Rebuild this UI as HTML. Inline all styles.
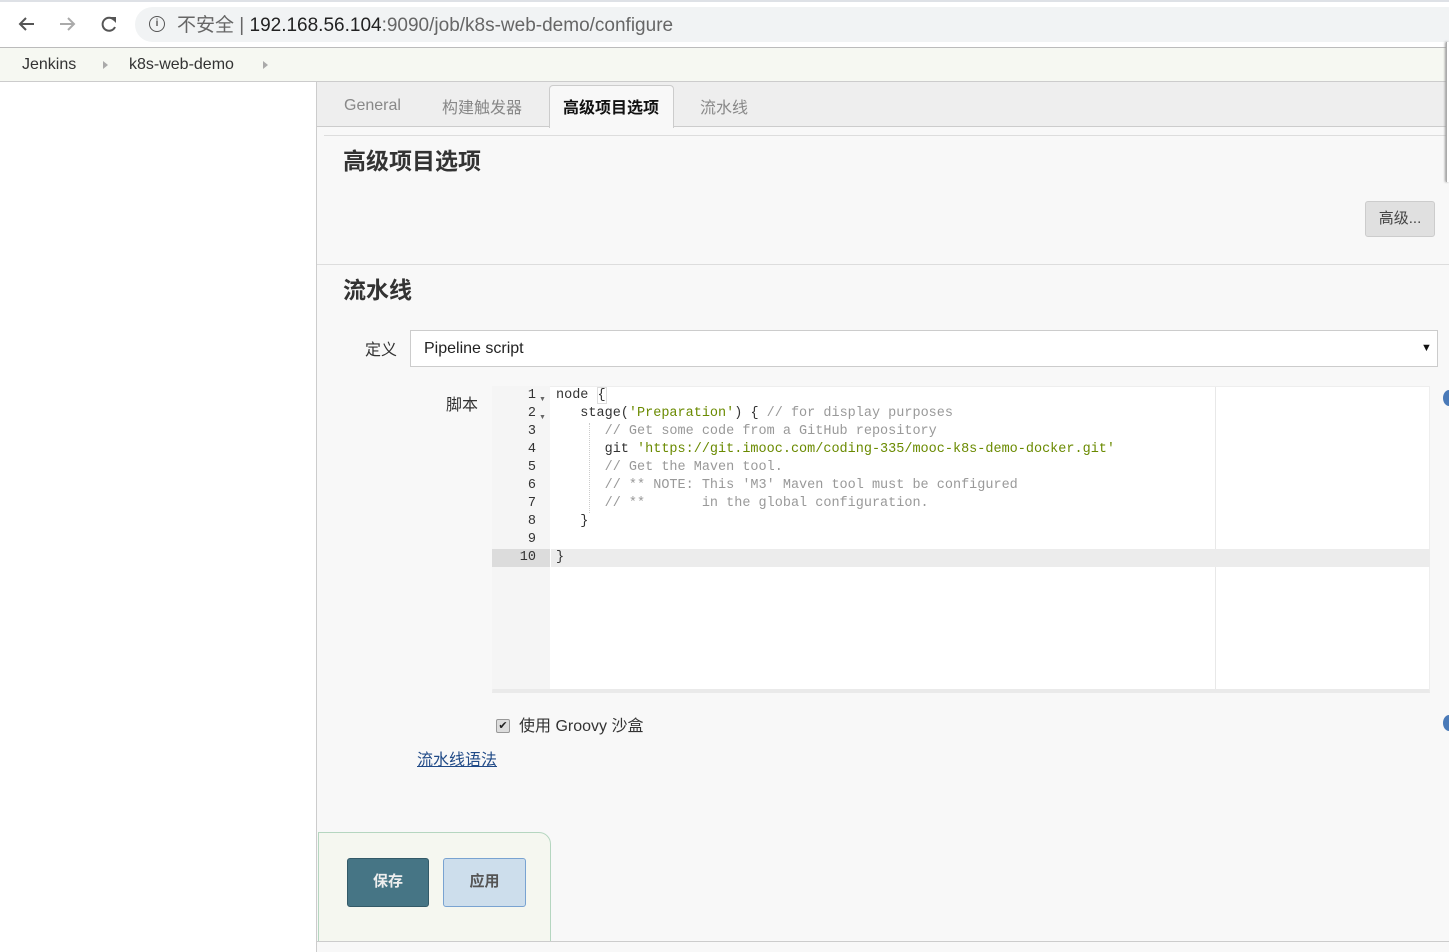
<!DOCTYPE html>
<html><head><meta charset="utf-8"><style>
*{margin:0;padding:0;box-sizing:border-box}
body{width:1449px;height:952px;overflow:hidden;background:#fff;font-family:"Liberation Sans","Noto Sans CJK SC",sans-serif;color:#333;position:relative}
.a{position:absolute}
.code{font-family:"Liberation Mono","DejaVu Sans Mono",monospace;font-size:13.5px;line-height:18px;white-space:pre;color:#333}
.c{color:#999}.s{color:#6a8a00}
</style></head><body>
<div class="a" style="left:0;top:0;width:1449px;height:2px;background:#dee1e6"></div>
<div class="a" style="left:0;top:47px;width:1449px;height:1px;background:#bbb"></div>
<svg class="a" style="left:16px;top:14px" width="110" height="22" viewBox="0 0 110 22">
<path d="M18 10H4M10 4L4 10L10 16" stroke="#555" stroke-width="2" fill="none"/>
<path d="M44 10H58M52 4L58 10L52 16" stroke="#aaa" stroke-width="2" fill="none"/>
<path d="M98 6A6.5 6.5 0 1 0 99 13" stroke="#555" stroke-width="2" fill="none"/><path d="M94 3L100 3L100 9Z" fill="#555"/>
</svg>
<div class="a" style="left:135px;top:7px;width:1330px;height:35px;border-radius:18px;background:#f1f3f4"></div>
<div class="a" style="left:149px;top:16px;width:16px;height:16px;border:1.6px solid #555;border-radius:50%;font-size:10px;text-align:center;line-height:13px;font-weight:bold;color:#555">i</div>
<div class="a" style="left:177px;top:10px;font-size:19px;color:#666">不安全 | <span style="color:#222">192.168.56.104</span>:9090/job/k8s-web-demo/configure</div>
<div class="a" style="left:0;top:48px;width:1449px;height:34px;background:#f6f8f2;border-bottom:1px solid #ccc"></div>
<div class="a" style="left:22px;top:56px;font-size:16px;color:#333">Jenkins</div>
<div class="a" style="left:103px;top:61px;border-left:5px solid #aaa;border-top:4px solid transparent;border-bottom:4px solid transparent"></div>
<div class="a" style="left:129px;top:56px;font-size:16px;color:#333">k8s-web-demo</div>
<div class="a" style="left:263px;top:61px;border-left:5px solid #aaa;border-top:4px solid transparent;border-bottom:4px solid transparent"></div>
<div class="a" style="left:316px;top:82px;width:1133px;height:870px;background:#f8f8f8;border-left:1px solid #ccc"></div>
<div class="a" style="left:317px;top:82px;width:1132px;height:45px;background:#eee;border-bottom:1px solid #ccc"></div>
<div class="a" style="left:549px;top:85px;width:125px;height:43px;background:#f8f8f8;border:1px solid #ccc;border-bottom:none;border-radius:4px 4px 0 0"></div>
<div class="a" style="left:344px;top:97px;font-size:16px;color:#888">General</div>
<div class="a" style="left:442px;top:94px;font-size:16px;color:#888">构建触发器</div>
<div class="a" style="left:563px;top:94px;font-size:16px;color:#111;font-weight:bold">高级项目选项</div>
<div class="a" style="left:700px;top:94px;font-size:16px;color:#888">流水线</div>
<div class="a" style="left:324px;top:135px;width:1125px;height:1px;background:#ddd"></div>
<div class="a" style="left:1446px;top:42px;width:3px;height:140px;background:#fff;border-left:1px solid #aaa;box-shadow:-1px 0 2px #999"></div>
<div class="a" style="left:343px;top:142px;font-size:23px;font-weight:bold;color:#333">高级项目选项</div>
<div class="a" style="left:1365px;top:201px;width:70px;height:36px;background:#e0e0e0;border:1px solid #ccc;border-radius:3px;font-size:15px;text-align:center;line-height:34px;color:#444">高级...</div>
<div class="a" style="left:317px;top:264px;width:1132px;height:1px;background:#ddd"></div>
<div class="a" style="left:343px;top:271px;font-size:23px;font-weight:bold;color:#333">流水线</div>
<div class="a" style="left:365px;top:336px;font-size:16px">定义</div>
<div class="a" style="left:410px;top:330px;width:1028px;height:37px;background:#fff;border:1px solid #ccc"></div>
<div class="a" style="left:424px;top:340px;font-size:16px;color:#222">Pipeline script</div>
<div class="a" style="left:1421px;top:342px;font-size:11px;color:#111">▼</div>
<div class="a" style="left:446px;top:391px;font-size:16px">脚本</div>
<div class="a" style="left:492px;top:386px;width:938px;height:307px;background:#fff;border:1px solid #eee;border-bottom:4px solid #eaeaea"></div>
<div class="a" style="left:492px;top:386px;width:58px;height:303px;background:#f5f5f5"></div>
<div class="a" style="left:1215px;top:387px;width:1px;height:302px;background:#e8e8e8"></div>
<div class="a" style="left:551px;top:549px;width:879px;height:18px;background:#ececec"></div>
<div class="a" style="left:492px;top:549px;width:58px;height:18px;background:#dcdcdc"></div>
<div class="a code" style="left:492px;top:387px;width:44px;text-align:right;color:#333">1
2
3
4
5
6
7
8
9
10</div>
<div class="a" style="left:539px;top:391px;font-size:7px;color:#666;line-height:18px">▼<br>▼</div>
<div class="a" style="left:589px;top:423px;width:1px;height:90px;border-left:1px dotted #ccc"></div>
<div class="a code" style="left:556px;top:387px">node <span style="border:1px solid #ddd">{</span>
   stage(<span class="s">'Preparation'</span>) { <span class="c">// for display purposes</span>
      <span class="c">// Get some code from a GitHub repository</span>
      git <span class="s">'https://git.imooc.com/coding-335/mooc-k8s-demo-docker.git'</span>
      <span class="c">// Get the Maven tool.</span>
      <span class="c">// ** NOTE: This 'M3' Maven tool must be configured</span>
      <span class="c">// **       in the global configuration.</span>
   }

}</div>
<div class="a" style="left:1443px;top:390px;width:12px;height:16px;border-radius:50%;background:#4a7ab8"></div>
<div class="a" style="left:1443px;top:715px;width:12px;height:16px;border-radius:50%;background:#4a7ab8"></div>
<div class="a" style="left:496px;top:719px;width:14px;height:14px;border:1px solid #999;border-radius:2px;background:#ddd;font-size:11px;line-height:12px;text-align:center;color:#222">✔</div>
<div class="a" style="left:519px;top:712px;font-size:16px;color:#333">使用 Groovy 沙盒</div>
<div class="a" style="left:417px;top:746px;font-size:16px;color:#204a87;text-decoration:underline">流水线语法</div>
<div class="a" style="left:318px;top:832px;width:233px;height:110px;background:#f5f7f0;border:1px solid #b5d6c0;border-radius:0 12px 0 0"></div>
<div class="a" style="left:317px;top:941px;width:1132px;height:1px;background:#ccc"></div>
<div class="a" style="left:347px;top:858px;width:82px;height:49px;background:#467585;border:1px solid #335a68;border-radius:3px;color:#eee;font-weight:bold;font-size:15px;text-align:center;line-height:45px">保存</div>
<div class="a" style="left:443px;top:858px;width:83px;height:49px;background:#cddeec;border:1px solid #79a3d1;border-radius:3px;color:#555;font-weight:bold;font-size:15px;text-align:center;line-height:45px">应用</div>
</body></html>
